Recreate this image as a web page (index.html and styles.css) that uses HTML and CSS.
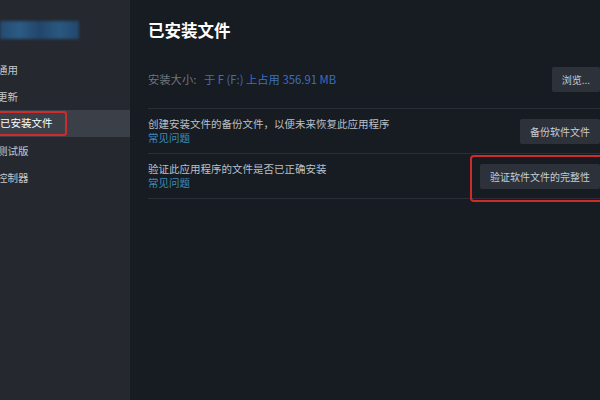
FILE: index.html
```html
<!DOCTYPE html>
<html lang="zh-CN">
<head>
<meta charset="utf-8">
<link rel="stylesheet" href="styles.css">
</head>
<body>
<div class="app">
  <aside class="sidebar">
    <div class="logo-blur"></div>
    <nav class="nav">
      <div class="nav-item"><span class="label">通用</span></div>
      <div class="nav-item"><span class="label">更新</span></div>
      <div class="nav-item active"><span class="label mark">已安装文件</span></div>
      <div class="nav-item"><span class="label">测试版</span></div>
      <div class="nav-item"><span class="label">控制器</span></div>
    </nav>
  </aside>
  <main class="main">
    <h1 class="title">已安装文件</h1>
    <section class="row row-size">
      <div class="row-text size-text">
        <span class="size-label">安装大小:</span>
        <span class="size-value">于 F (F:) 上占用 356.91 MB</span>
      </div>
      <button class="btn">浏览...</button>
    </section>
    <section class="row">
      <div class="row-text">
        <div class="desc">创建安装文件的备份文件，以便未来恢复此应用程序</div>
        <a class="faq">常见问题</a>
      </div>
      <button class="btn">备份软件文件</button>
    </section>
    <section class="row">
      <div class="row-text">
        <div class="desc">验证此应用程序的文件是否已正确安装</div>
        <a class="faq">常见问题</a>
      </div>
      <div class="btn-mark">
        <button class="btn">验证软件文件的完整性</button>
      </div>
    </section>
  </main>
</div>
</body>
</html>
```

FILE: styles.css
```css
html, body {
  margin: 0;
  padding: 0;
  width: 600px;
  height: 400px;
  overflow: hidden;
  background: #171b22;
  font-family: "Noto Sans CJK SC", "Noto Sans", sans-serif;
}
.app {
  display: flex;
  width: 600px;
  height: 400px;
  overflow: hidden;
}
.sidebar {
  width: 130px;
  flex: none;
  background: #25282e;
  padding-top: 21px;
  box-sizing: border-box;
}
.logo-blur {
  width: 79px;
  height: 18px;
  background: linear-gradient(90deg, #254b70 0%, #2b5b85 25%, #22456a 50%, #2a5880 75%, #22476c 100%);
  filter: blur(1.5px);
}
.nav {
  margin-top: 17px;
  display: flex;
  flex-direction: column;
}
.nav-item {
  height: 27px;
  display: flex;
  align-items: center;
  font-size: 10.5px;
  color: #c3c7cc;
}
.nav-item .label {
  margin-left: -3px;
}
.nav-item.active {
  background: #3b3f47;
  color: #ffffff;
}
.nav-item .mark {
  margin-left: -8px;
  padding: 2px 12px 3px 6px;
  border: 2px solid #cf2b2b;
  border-radius: 3px;
  line-height: 16px;
}
.main {
  flex: 1;
  padding: 18px 0 0 18px;
  box-sizing: border-box;
  overflow: hidden;
}
.title {
  margin: 0 0 15px 0;
  font-size: 16.5px;
  font-weight: 700;
  color: #ffffff;
  line-height: 24px;
}
.row {
  display: flex;
  align-items: center;
  justify-content: space-between;
  border-bottom: 1px solid #2a2f37;
  height: 44px;
}
.row-size {
  height: 44px;
  padding-bottom: 7px;
}
.row-text {
  font-size: 10.5px;
  line-height: 14px;
}
.size-text {
  font-size: 11.3px;
}
.size-label {
  color: #6f767e;
  margin-right: 5px;
}
.size-value {
  color: #3e6fbd;
}
.desc {
  color: #bcc0c6;
}
.faq {
  color: #3d8cb6;
  display: block;
}
.btn {
  background: #2d3139;
  color: #c8ccd1;
  border: none;
  border-radius: 2px;
  font-family: inherit;
  font-size: 10px;
  height: 25px;
  padding: 0 10px;
}
.btn-mark {
  position: relative;
  display: flex;
}
.btn-mark::after {
  content: "";
  position: absolute;
  left: -10px;
  top: -9px;
  right: -14px;
  bottom: -13px;
  border: 2px solid #cf2b2b;
  border-radius: 4px;
  pointer-events: none;
}
```
